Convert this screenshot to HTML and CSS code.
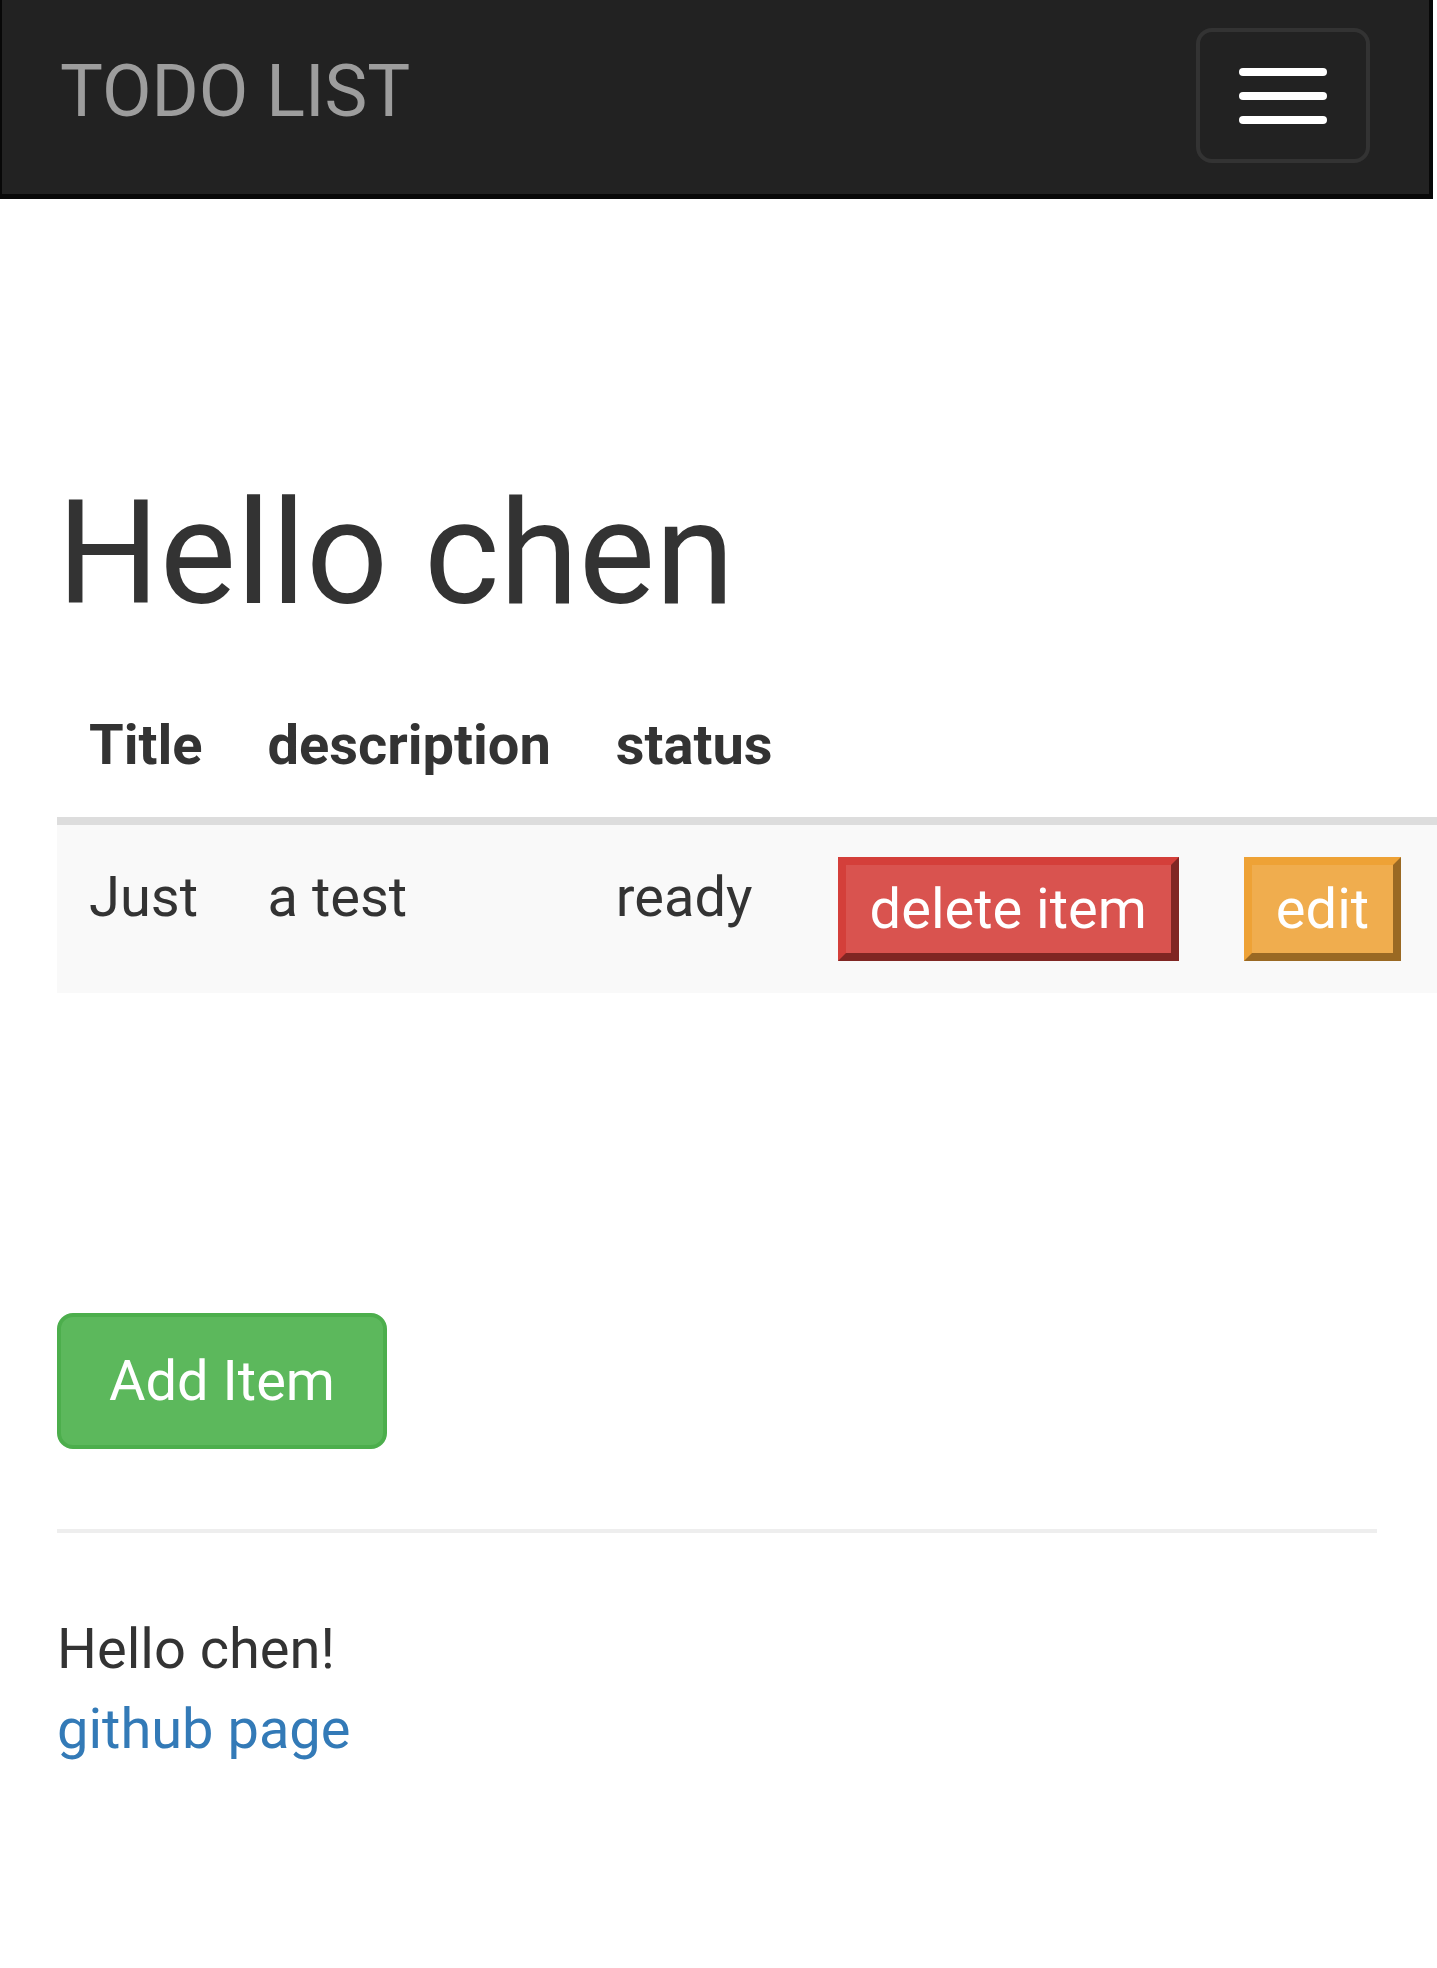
FILE: index.html
```html
<!DOCTYPE html>
<html lang="en">
<head>
<meta charset="utf-8">
<title>TODO LIST</title>
<link rel="stylesheet" href="styles.css">
</head>
<body>
<nav class="navbar">
  <a class="brand" href="#">TODO LIST</a>
  <button class="toggle" type="button" aria-label="Toggle navigation">
    <span class="bar"></span>
    <span class="bar"></span>
    <span class="bar"></span>
  </button>
</nav>
<main class="container">
  <h1 class="title">Hello chen</h1>
  <table class="todo-table">
    <thead>
      <tr>
        <th>Title</th>
        <th>description</th>
        <th>status</th>
        <th></th>
        <th></th>
      </tr>
    </thead>
    <tbody>
      <tr>
        <td>Just</td>
        <td>a test</td>
        <td>ready</td>
        <td><button class="raw-btn danger" type="button">delete item</button></td>
        <td class="last"><button class="raw-btn warning" type="button">edit</button></td>
      </tr>
    </tbody>
  </table>
  <button class="btn-success" type="button">Add Item</button>
  <hr class="rule">
  <footer class="footer">
    <div class="greet">Hello chen!</div>
    <a class="link" href="#">github page</a>
  </footer>
</main>
</body>
</html>
```
FILE: styles.css
```css
html, body {
  margin: 0;
  padding: 0;
  overflow-x: hidden;
}
body {
  font-family: Roboto, "Noto Sans", "Liberation Sans", sans-serif;
  font-size: 56px;
  line-height: 80px;
  color: #333;
  background: #fff;
}
.navbar {
  box-sizing: border-box;
  width: 1433px;
  height: 199px;
  background: #222;
  border-left: 2px solid #080808;
  border-right: 4px solid #080808;
  border-bottom: 5px solid #080808;
  display: flex;
  justify-content: space-between;
  align-items: flex-start;
}
.brand {
  display: block;
  padding: 52px 60px 0 58px;
  font-size: 72px;
  line-height: 80px;
  color: #9d9d9d;
  text-decoration: none;
}
.toggle {
  box-sizing: border-box;
  margin: 28px 59px 0 0;
  width: 174px;
  height: 135px;
  background: transparent;
  border: 4px solid #333;
  border-radius: 16px;
  padding: 36px 39px;
  display: flex;
  flex-direction: column;
  gap: 16px;
  align-items: center;
}
.bar {
  display: block;
  width: 88px;
  height: 8px;
  border-radius: 4px;
  background: #fff;
  flex: none;
}
.container {
  padding: 0 60px 0 57px;
}
.title {
  margin: 276px 0 40px 0;
  font-size: 144px;
  line-height: 158px;
  font-weight: 400;
  color: #333;
}
.todo-table {
  width: 100%;
  border-collapse: collapse;
  border-spacing: 0;
  white-space: nowrap;
}
.todo-table th {
  text-align: left;
  font-weight: 700;
  padding: 32px 33px 32px 32px;
  vertical-align: bottom;
  border-bottom: 8px solid #ddd;
}
.todo-table td {
  padding: 32px 33px 32px 32px;
  vertical-align: top;
  background: #f9f9f9;
}
.todo-table td.last {
  padding-right: 60px;
}
.raw-btn {
  font-family: inherit;
  font-size: 56px;
  line-height: 80px;
  color: #fff;
  padding: 4px 24px;
  border-width: 8px;
  border-style: outset;
  margin: 0;
}
.danger {
  background: #d9534f;
  border-color: #d43f3a;
}
.warning {
  background: #f0ad4e;
  border-color: #eea236;
}
.btn-success {
  display: block;
  margin-top: 320px;
  font-family: inherit;
  font-size: 56px;
  line-height: 80px;
  color: #fff;
  background: #5cb85c;
  border: 4px solid #4cae4c;
  border-radius: 16px;
  padding: 24px 48px;
}
.rule {
  margin: 80px 0 76px 0;
  border: 0;
  border-top: 4px solid #eee;
  height: 0;
}
.footer {
  padding-bottom: 100px;
}
.link {
  color: #337ab7;
  text-decoration: none;
}
```
